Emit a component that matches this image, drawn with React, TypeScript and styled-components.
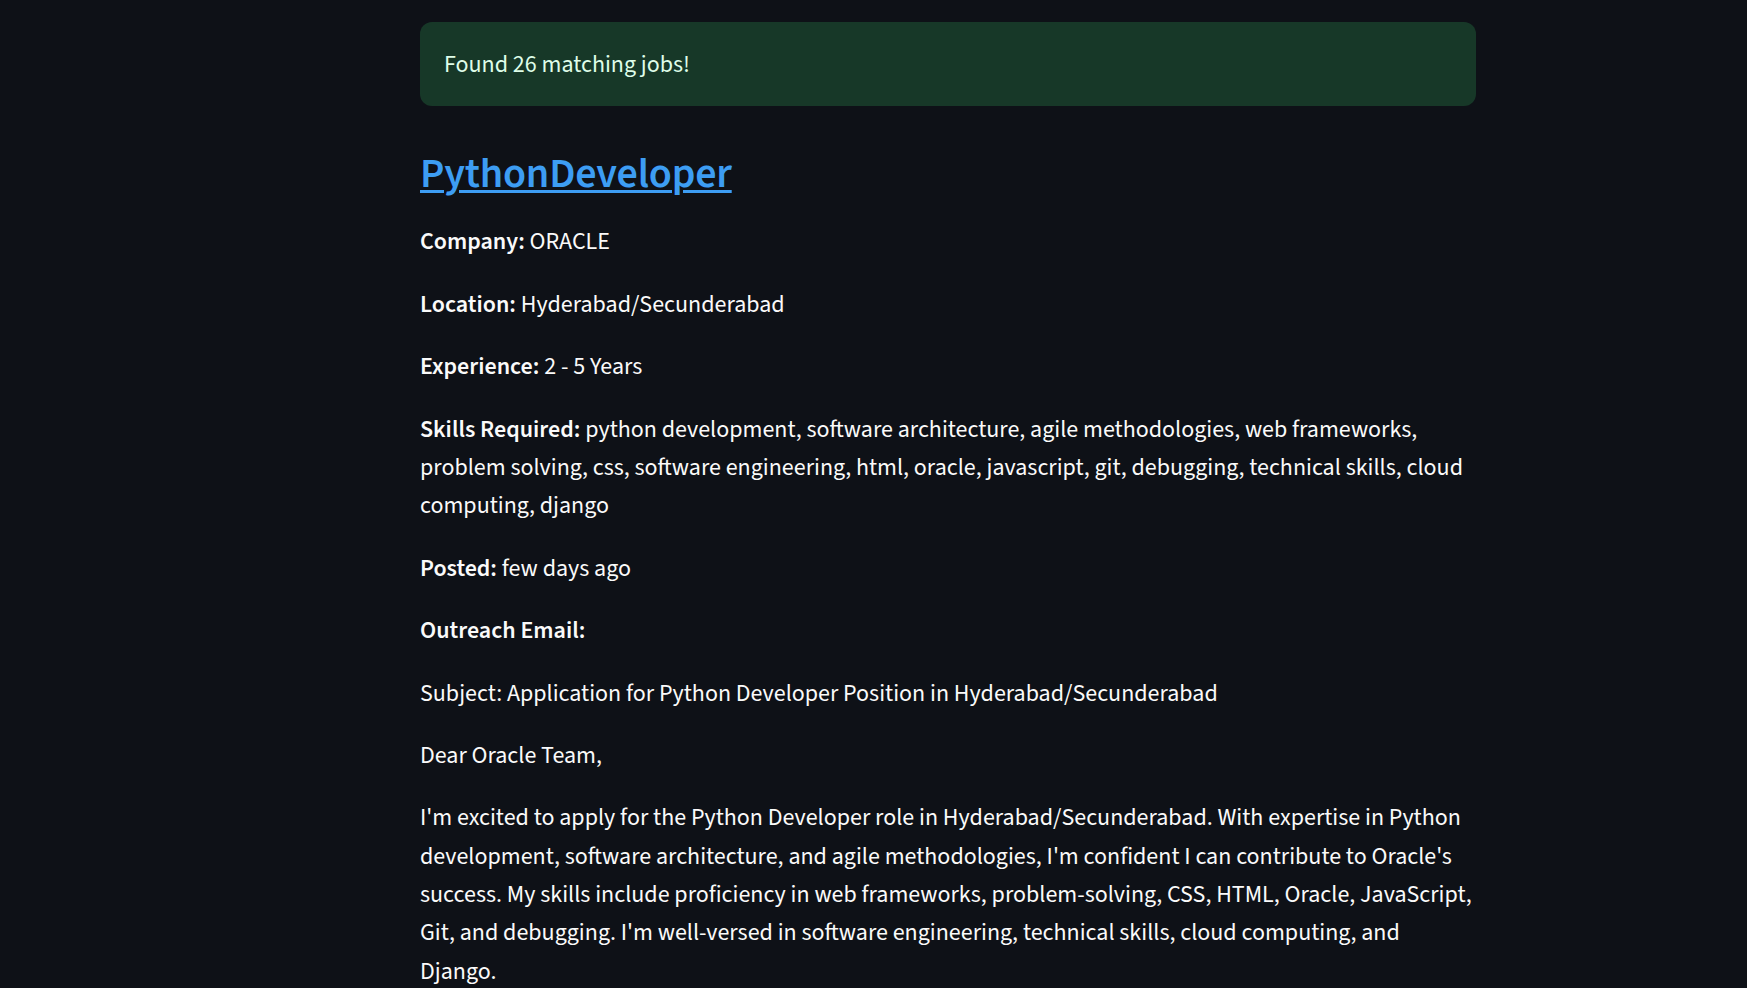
import React from "react";
import styled, { createGlobalStyle } from "styled-components";

const GlobalStyle = createGlobalStyle`
  html, body {
    margin: 0;
    padding: 0;
    background: #0e1117;
  }
  body {
    font-family: "Source Sans 3", "Source Sans Pro", "Liberation Sans", sans-serif;
    color: #fafafa;
    -webkit-font-smoothing: antialiased;
  }
`;

const Page = styled.main`
  min-height: 988px;
  background: #0e1117;
  padding: 22px 0 0 420px;
  box-sizing: border-box;
  overflow: hidden;
`;

const Column = styled.div`
  width: 1056px;
  display: flex;
  flex-direction: column;
  gap: 24px;
`;

const SuccessAlert = styled.div`
  background: rgba(61, 213, 109, 0.2);
  color: #dffde9;
  border-radius: 12px;
  padding: 23.8px 24px 21.8px;
  font-size: 24px;
  line-height: 38.4px;
`;

const Markdown = styled.div`
  font-size: 24px;
  line-height: 1.6;
  color: #fafafa;
`;

const JobTitle = styled.h3`
  margin: 0;
  padding: 19px 0 24px;
  font-size: 42px;
  font-weight: 600;
  line-height: 1.2;
  letter-spacing: -0.005em;
`;

const TitleLink = styled.a`
  color: #3d9df3;
  text-decoration: underline;
  text-decoration-thickness: 2.6px;
  text-underline-offset: 3px;
`;

const Para = styled.p`
  margin: 0 0 24px;
`;

const Label = styled.strong`
  font-weight: 600;
`;

const details: [string, string][] = [
  ["Company:", "ORACLE"],
  ["Location:", "Hyderabad/Secunderabad"],
  ["Experience:", "2 - 5 Years"],
  [
    "Skills Required:",
    "python development, software architecture, agile methodologies, web frameworks, problem solving, css, software engineering, html, oracle, javascript, git, debugging, technical skills, cloud computing, django",
  ],
  ["Posted:", "few days ago"],
];

const emailParas = [
  "Subject: Application for Python Developer Position in Hyderabad/Secunderabad",
  "Dear Oracle Team,",
  "I'm excited to apply for the Python Developer role in Hyderabad/Secunderabad. With expertise in Python development, software architecture, and agile methodologies, I'm confident I can contribute to Oracle's success. My skills include proficiency in web frameworks, problem-solving, CSS, HTML, Oracle, JavaScript, Git, and debugging. I'm well-versed in software engineering, technical skills, cloud computing, and Django.",
];

export default function App() {
  return (
    <>
      <GlobalStyle />
      <Page>
        <Column>
          <SuccessAlert>Found 26 matching jobs!</SuccessAlert>
          <Markdown>
            <JobTitle>
              <TitleLink href="#">PythonDeveloper</TitleLink>
            </JobTitle>
            {details.map(([label, value]) => (
              <Para key={label}>
                <Label>{label}</Label> {value}
              </Para>
            ))}
            <Para>
              <Label>Outreach Email:</Label>
            </Para>
            {emailParas.map((t) => (
              <Para key={t.slice(0, 20)}>{t}</Para>
            ))}
          </Markdown>
        </Column>
      </Page>
    </>
  );
}
